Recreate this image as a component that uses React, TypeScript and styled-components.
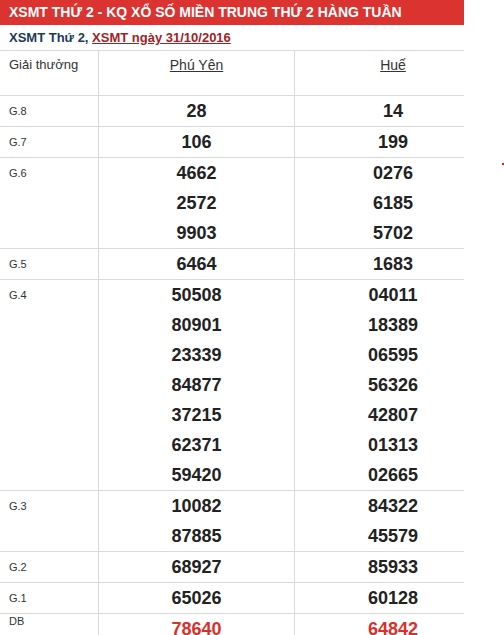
import React from "react";
import styled, { createGlobalStyle } from "styled-components";

const Global = createGlobalStyle`
  html, body { margin: 0; padding: 0; background: #fff; }
  body { font-family: Arial, "Liberation Sans", sans-serif; color: #333; }
`;

const Page = styled.div`
  position: relative;
  width: 504px;
  height: 635px;
  overflow: hidden;
`;

const Box = styled.div`
  width: 464px;
  overflow: hidden;
`;

const TitleBar = styled.h2`
  margin: 0;
  height: 25px;
  line-height: 25px;
  padding-left: 9px;
  background: #db3330;
  color: #fff;
  font-size: 14px;
  font-weight: bold;
  white-space: nowrap;
`;

const SubTitle = styled.div`
  height: 25px;
  line-height: 25px;
  padding-left: 9px;
  font-size: 13px;
  font-weight: bold;
  color: #1d3a5a;
  white-space: nowrap;
`;

const SubLink = styled.a`
  color: #a3211f;
  text-decoration: underline;
`;

const Table = styled.div`
  width: 491px;
  border-top: 1px solid #d9d9d9;
`;

const Row = styled.div<{ $head?: boolean }>`
  display: grid;
  grid-template-columns: 99px 196px 196px;
  border-bottom: 1px solid #d9d9d9;
  min-height: ${(p) => (p.$head ? "44px" : "30px")};
`;

const LabelCell = styled.div<{ $top?: boolean }>`
  border-right: 1px solid #d9d9d9;
  padding: 0 9px;
  font-size: 11px;
  line-height: ${(p) => (p.$top ? "14px" : "30px")};
  color: #333;
`;

const HeadLabel = styled.div`
  border-right: 1px solid #d9d9d9;
  padding: 6px 9px;
  font-size: 13px;
  line-height: 16px;
  color: #333;
`;

const HeadCell = styled.div<{ $last?: boolean }>`
  border-right: ${(p) => (p.$last ? "none" : "1px solid #d9d9d9")};
  padding-top: 6px;
  text-align: center;
  font-size: 14px;
  line-height: 16px;
`;

const HeadLink = styled.a`
  color: #333;
  text-decoration: underline;
`;

const NumCell = styled.div<{ $last?: boolean }>`
  border-right: ${(p) => (p.$last ? "none" : "1px solid #d9d9d9")};
  display: flex;
  flex-direction: column;
  align-items: center;
`;

const Num = styled.span<{ $special?: boolean }>`
  display: block;
  font-size: 18px;
  font-weight: bold;
  line-height: 30px;
  color: ${(p) => (p.$special ? "#d9302c" : "#222")};
`;

const Mark = styled.span`
  position: absolute;
  left: 502px;
  top: 163px;
  width: 2px;
  height: 2px;
  background: #e3201b;
`;

type Prize = { label: string; a: string[]; b: string[]; special?: boolean };

const prizes: Prize[] = [
  { label: "G.8", a: ["28"], b: ["14"] },
  { label: "G.7", a: ["106"], b: ["199"] },
  { label: "G.6", a: ["4662", "2572", "9903"], b: ["0276", "6185", "5702"] },
  { label: "G.5", a: ["6464"], b: ["1683"] },
  {
    label: "G.4",
    a: ["50508", "80901", "23339", "84877", "37215", "62371", "59420"],
    b: ["04011", "18389", "06595", "56326", "42807", "01313", "02665"],
  },
  { label: "G.3", a: ["10082", "87885"], b: ["84322", "45579"] },
  { label: "G.2", a: ["68927"], b: ["85933"] },
  { label: "G.1", a: ["65026"], b: ["60128"] },
  { label: "DB", a: ["78640"], b: ["64842"], special: true },
];

export default function App() {
  return (
    <Page>
      <Global />
      <Box>
        <TitleBar>XSMT THỨ 2 - KQ XỔ SỐ MIỀN TRUNG THỨ 2 HÀNG TUẦN</TitleBar>
        <SubTitle>
          XSMT Thứ 2, <SubLink href="#">XSMT ngày 31/10/2016</SubLink>
        </SubTitle>
        <Table>
          <Row $head>
            <HeadLabel>Giải thưởng</HeadLabel>
            <HeadCell>
              <HeadLink href="#">Phú Yên</HeadLink>
            </HeadCell>
            <HeadCell $last>
              <HeadLink href="#">Huế</HeadLink>
            </HeadCell>
          </Row>
          {prizes.map((p) => (
            <Row key={p.label}>
              <LabelCell $top={p.special}>{p.label}</LabelCell>
              <NumCell>
                {p.a.map((n) => (
                  <Num key={n} $special={p.special}>
                    {n}
                  </Num>
                ))}
              </NumCell>
              <NumCell $last>
                {p.b.map((n) => (
                  <Num key={n} $special={p.special}>
                    {n}
                  </Num>
                ))}
              </NumCell>
            </Row>
          ))}
        </Table>
      </Box>
      <Mark />
    </Page>
  );
}
